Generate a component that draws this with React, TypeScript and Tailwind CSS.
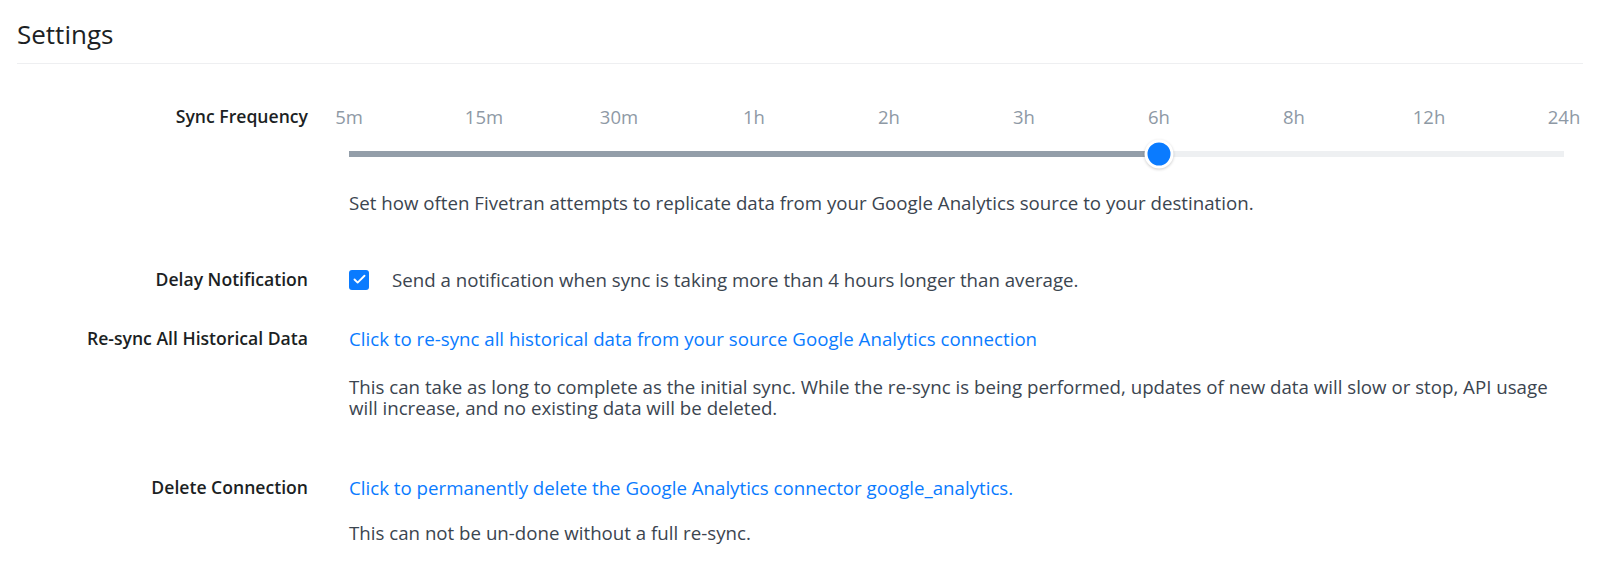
import { Check } from 'lucide-react'

const ticks = ['5m', '15m', '30m', '1h', '2h', '3h', '6h', '8h', '12h', '24h']
const selected = 6

const Label = ({ children }: { children: React.ReactNode }) => (
  <div className="w-[291px] shrink-0 text-right text-[17.6px] font-semibold text-[#1c1f24]">{children}</div>
)

export default function App() {
  const pct = (selected / (ticks.length - 1)) * 100

  return (
    <div className="min-h-screen bg-white px-[17px] pt-[18px] font-['Open_Sans','Liberation_Sans',sans-serif] leading-[21px] text-[#3b4550]">
      <h1 className="border-b border-[#eeeff1] pb-[13px] text-[26px] leading-[32px] text-[#1c1f24]">Settings</h1>

      <div className="mt-[42px] flex">
        <Label>Sync Frequency</Label>
        <div className="ml-[41px] flex-1 pr-[19px]">
          <div className="flex justify-between text-[18.5px] text-[#8e99a5]">
            {ticks.map((t) => (
              <div key={t} className="flex w-0 justify-center whitespace-nowrap">{t}</div>
            ))}
          </div>
          <div className="relative mt-[13px] flex h-[28px] items-center">
            <div className="flex h-[6px] w-full bg-[#eef0f2]">
              <div className="h-full bg-[#939ea9]" style={{ width: `${pct}%` }} />
            </div>
            <div
              className="absolute top-1/2 h-[29px] w-[29px] -translate-x-1/2 -translate-y-1/2 rounded-full border-[3px] border-white bg-[#0a7bff] shadow-[0_1px_3px_rgba(0,0,0,0.2)]"
              style={{ left: `${pct}%` }}
            />
          </div>
          <p className="mt-[24px] text-[18.7px]">
            Set how often Fivetran attempts to replicate data from your Google Analytics source to your destination.
          </p>
        </div>
      </div>

      <div className="mt-[56px] flex items-center">
        <Label>Delay Notification</Label>
        <div className="ml-[41px] flex items-center">
          <span className="flex h-[20px] w-[20px] items-center justify-center rounded-[3px] bg-[#0a7bff]">
            <Check className="h-[15px] w-[15px] text-white" strokeWidth={3} />
          </span>
          <span className="ml-[23px] text-[18.7px]">Send a notification when sync is taking more than 4 hours longer than average.</span>
        </div>
      </div>

      <div className="mt-[38px] flex">
        <Label>Re-sync All Historical Data</Label>
        <div className="ml-[41px] flex-1 pr-[19px] text-[18.7px]">
          <a className="text-[#0a7bff]">Click to re-sync all historical data from your source Google Analytics connection</a>
          <p className="mt-[27px]">
            This can take as long to complete as the initial sync. While the re-sync is being performed, updates of new data will slow or stop, API usage will increase, and no existing data will be deleted.
          </p>
        </div>
      </div>

      <div className="mt-[59px] flex">
        <Label>Delete Connection</Label>
        <div className="ml-[41px] flex-1 pr-[19px] text-[18.7px]">
          <a className="text-[#0a7bff]">Click to permanently delete the Google Analytics connector google_analytics.</a>
          <p className="mt-[24px]">This can not be un-done without a full re-sync.</p>
        </div>
      </div>
    </div>
  )
}
